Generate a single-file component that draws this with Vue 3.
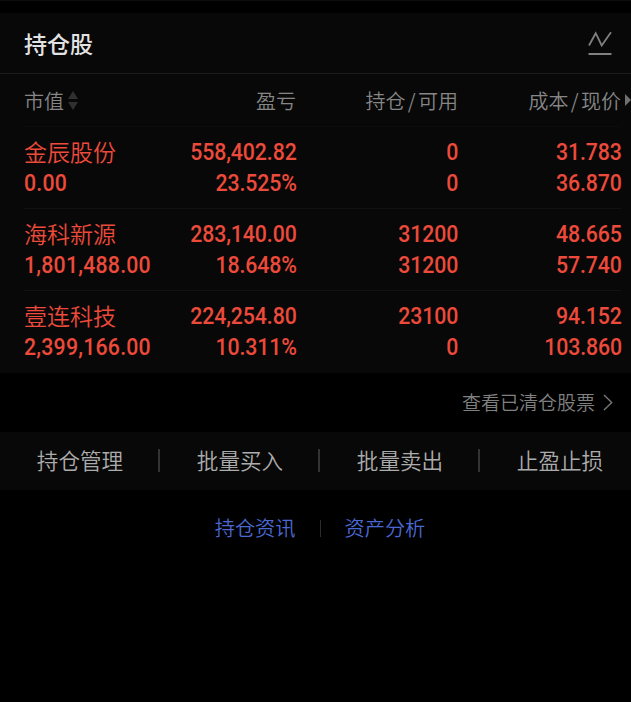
<template>
  <div class="page">
    <section class="holdings">
      <header class="title-bar">
        <h1>持仓股</h1>
        <svg class="chart-icon" width="24" height="26" viewBox="0 0 24 26" fill="none">
          <path d="M1 14.5 7.7 2.2 13.7 14.5 23 1.2" stroke="#808080" stroke-width="1.8" />
          <path d="M.5 23H23.5" stroke="#808080" stroke-width="2" />
        </svg>
      </header>
      <div class="grid head">
        <div class="sortable">
          市值
          <svg width="12" height="19" viewBox="0 0 12 19" fill="#303030"><path d="M6 0 11 8H1ZM6 19 1 11H11Z" /></svg>
        </div>
        <div>盈亏</div>
        <div>持仓<i>/</i>可用</div>
        <div>成本<i>/</i>现价</div>
        <svg class="more" width="6" height="12" viewBox="0 0 6 12" fill="#707070"><path d="M0 0 6 6 0 12Z" /></svg>
      </div>
      <div v-for="stock in stocks" :key="stock.name" class="grid row">
        <div class="cell">
          <span class="name">{{ stock.name }}</span>
          <span class="num">{{ stock.value }}</span>
        </div>
        <div class="cell">
          <span class="num">{{ stock.profit }}</span>
          <span class="num">{{ stock.rate }}</span>
        </div>
        <div class="cell">
          <span class="num">{{ stock.amount }}</span>
          <span class="num">{{ stock.usable }}</span>
        </div>
        <div class="cell">
          <span class="num">{{ stock.cost }}</span>
          <span class="num">{{ stock.price }}</span>
        </div>
      </div>
    </section>

    <div class="cleared">
      <span>查看已清仓股票</span>
      <svg width="10" height="17" viewBox="0 0 10 17" fill="none" stroke="#777" stroke-width="1.4"><path d="M1 1 8.7 8.5 1 16" /></svg>
    </div>

    <nav class="actions">
      <div v-for="action in actions" :key="action" class="action">{{ action }}</div>
    </nav>

    <div class="links">
      <a>持仓资讯</a>
      <span class="line"></span>
      <a>资产分析</a>
    </div>
  </div>
</template>

<script setup>
const stocks = [
  { name: '金辰股份', value: '0.00', profit: '558,402.82', rate: '23.525%', amount: '0', usable: '0', cost: '31.783', price: '36.870' },
  { name: '海科新源', value: '1,801,488.00', profit: '283,140.00', rate: '18.648%', amount: '31200', usable: '31200', cost: '48.665', price: '57.740' },
  { name: '壹连科技', value: '2,399,166.00', profit: '224,254.80', rate: '10.311%', amount: '23100', usable: '0', cost: '94.152', price: '103.860' }
];
const actions = ['持仓管理', '批量买入', '批量卖出', '止盈止损'];
</script>

<style>
body {
  background: #000;
}
</style>

<style scoped>
.page {
  box-sizing: border-box;
  width: 631px;
  height: 702px;
  padding-top: 12px;
  overflow: hidden;
  background: #000;
  border-top: 1px solid #0c0c0c;
  font-family: 'Noto Sans CJK SC', sans-serif;
  font-weight: 350;
}

.holdings {
  height: 360px;
  background: #080808;
}

.title-bar {
  box-sizing: border-box;
  display: flex;
  align-items: center;
  justify-content: space-between;
  height: 61px;
  padding: 0 19px 0 24px;
  border-bottom: 1px solid #1c1c1c;
}

h1 {
  margin: 0;
  padding-bottom: 1px;
  font-size: 23px;
  font-weight: 500;
  line-height: 34px;
  color: #e2e2e2;
}

.chart-icon {
  margin-top: 2px;
}

.grid {
  display: grid;
  grid-template-columns: 130px 142px 162px 163px;
  padding-left: 24px;
  text-align: right;
}

.head {
  position: relative;
  height: 53px;
  line-height: 53px;
  font-size: 20px;
  color: #868686;
}

.head i {
  display: inline-block;
  width: 12.5px;
  font-style: normal;
  text-align: center;
}

.sortable {
  display: flex;
  align-items: center;
  gap: 3px;
  height: 53px;
}

.more {
  position: absolute;
  top: 20px;
  right: 0;
}

.row {
  position: relative;
  height: 82px;
  color: #ec4a3a;
}

.row::before {
  position: absolute;
  top: -1px;
  left: 24px;
  right: 10px;
  height: 1px;
  background: #121212;
  content: '';
}

.head + .row::before {
  background: #0c0c0c;
}

.cell {
  display: flex;
  flex-direction: column;
  align-items: flex-end;
  padding-top: 10px;
  line-height: 31px;
  white-space: nowrap;
}

.cell:first-child {
  align-items: flex-start;
}

/* narrow, evenly spaced figures */
.num {
  margin-right: -0.5px;
  font-family: Roboto, sans-serif;
  font-size: 23.5px;
  font-weight: 500;
  letter-spacing: -0.1px;
  transform: scaleX(0.905);
  transform-origin: right center;
}

.cell:first-child .num {
  letter-spacing: 0.25px;
  transform-origin: left center;
}

.name {
  margin-top: -1px;
  padding-bottom: 1px;
  font-size: 23px;
}

.cleared {
  display: flex;
  align-items: center;
  justify-content: flex-end;
  gap: 8px;
  height: 59px;
  padding-right: 18px;
  font-size: 19px;
  color: #808080;
}

.cleared span {
  padding-bottom: 2px;
}

.actions {
  display: flex;
  height: 58px;
  background: #080808;
}

.action {
  position: relative;
  flex: none;
  width: 160px;
  font-size: 21.6px;
  line-height: 56px;
  text-align: center;
  color: #acacac;
}

.action:not(:last-child)::after {
  position: absolute;
  top: 17px;
  right: 0;
  width: 2px;
  height: 23px;
  background: #333;
  content: '';
}

.links {
  display: flex;
  align-items: center;
  justify-content: center;
  gap: 24px;
  padding-left: 9px;
  height: 76px;
  font-size: 20.2px;
  color: #4b68d2;
}

.links a {
  padding-bottom: 1px;
}

.line {
  width: 1px;
  height: 17px;
  background: #2c2c2c;
}
</style>
